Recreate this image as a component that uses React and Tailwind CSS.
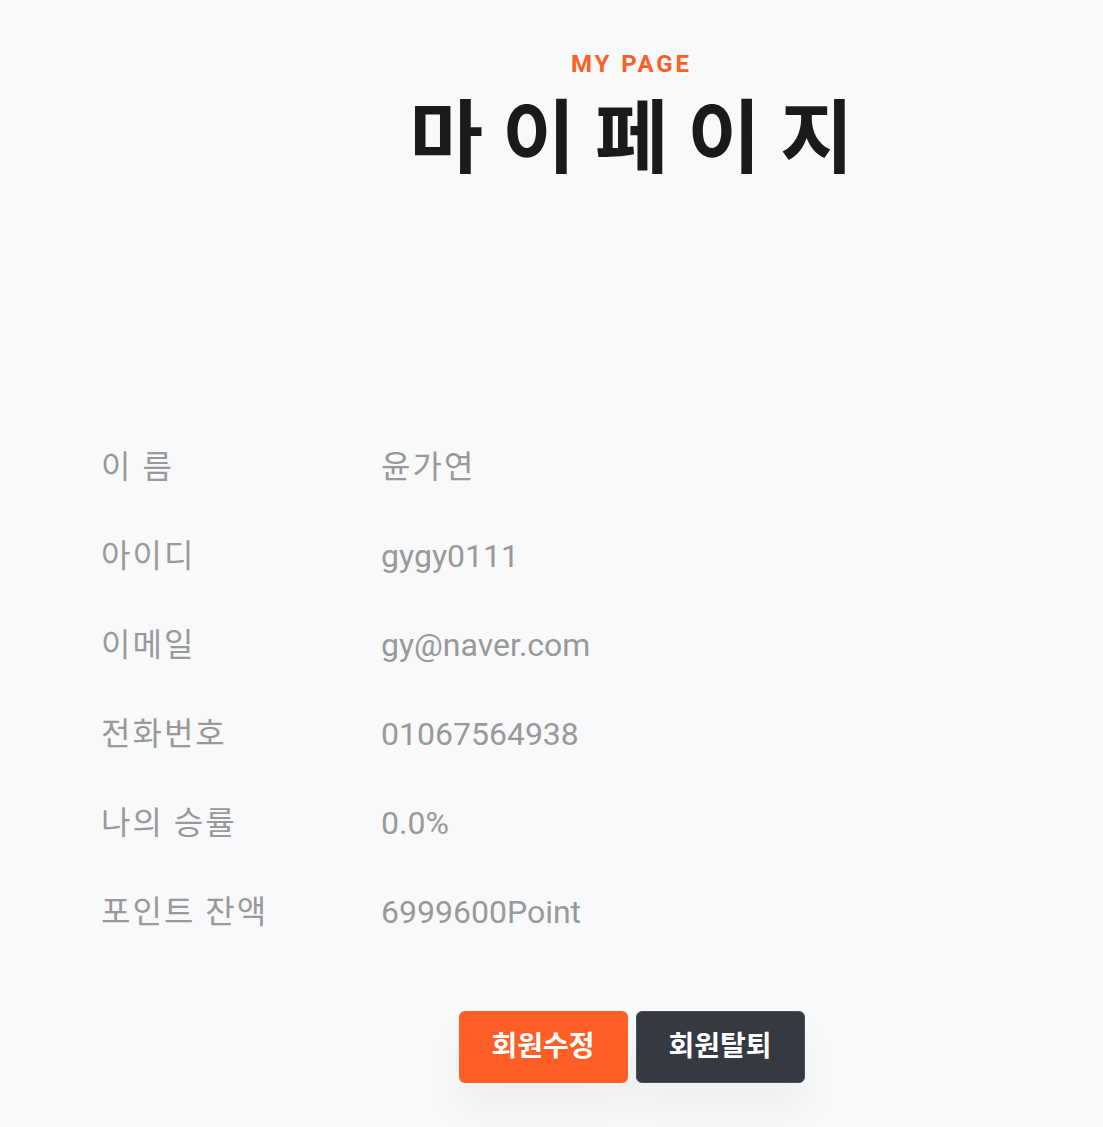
import React from 'react'

const rows = [
  ['이 름', '윤가연', true],
  ['아이디', 'gygy0111', false],
  ['이메일', 'gy@naver.com', false],
  ['전화번호', '01067564938', false],
  ['나의 승률', '0.0%', false],
  ['포인트 잔액', '6999600Point', false],
]

const font = { fontFamily: 'Roboto, "Noto Sans CJK KR", sans-serif' }

export default function App() {
  return (
    <div className="min-h-[1127px] overflow-hidden bg-[#f8f9fa]" style={font}>
      {/* Header */}
      <div className="pl-[160px] pt-[50px] text-center">
        <p className="text-[24px] font-bold leading-[28px] tracking-[0.12em] text-[#ff5f27]">MY PAGE</p>
        <h1 className="mt-[15px] indent-[19px] text-[80px] font-bold leading-[92px] tracking-[19px] text-[#1a1a1a]">마이페이지</h1>
      </div>

      {/* Info rows */}
      <div className="mt-[263px] flex flex-col gap-[50px] pl-[101px]">
        {rows.map(([label, value, kr]) => (
          <div key={label} className="flex items-center text-[32px] leading-[39px] text-[#999999]">
            <span className="w-[280px] tracking-[2px]">{label}</span>
            <span className={kr ? 'tracking-[2px]' : ''}>{value}</span>
          </div>
        ))}
      </div>

      {/* Buttons */}
      <div className="mt-[79px] flex justify-center gap-[8px] pl-[160px]">
        <button className="h-[72px] w-[169px] rounded-[6px] bg-[#ff5f27] text-[28px] font-bold text-white shadow-[0_28px_40px_rgba(0,0,0,0.045)]">
          회원수정
        </button>
        <button className="h-[72px] w-[169px] rounded-[6px] border border-[#4a4f57] bg-[#353a42] text-[28px] font-bold text-white shadow-[0_28px_40px_rgba(0,0,0,0.045)]">
          회원탈퇴
        </button>
      </div>
    </div>
  )
}
